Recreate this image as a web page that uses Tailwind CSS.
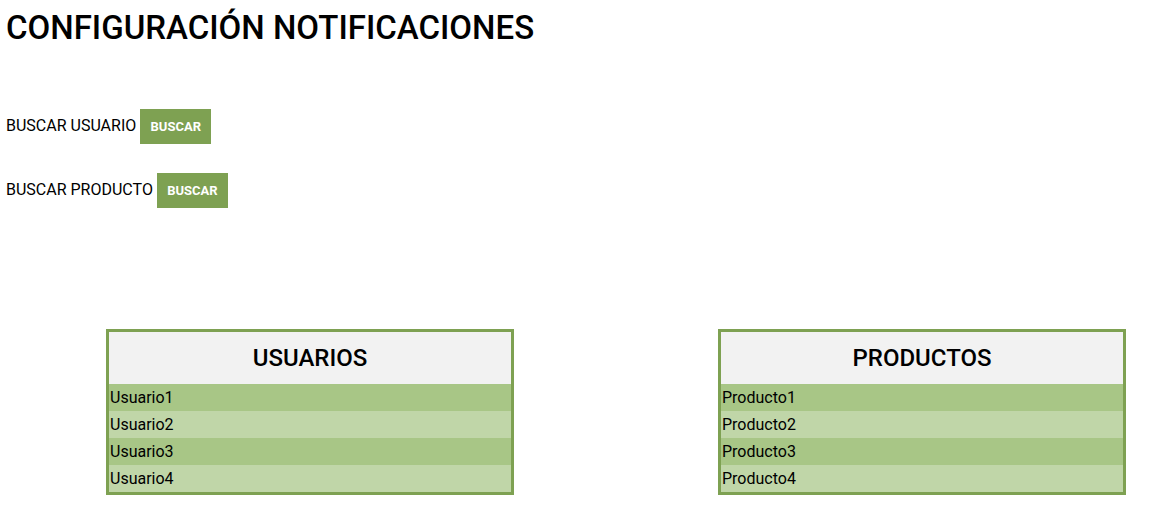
<!DOCTYPE html>
<html lang="es">
<head>
<meta charset="utf-8">
<title>Configuración notificaciones</title>
<script src="https://cdn.jsdelivr.net/npm/@tailwindcss/browser@4"></script>
</head>
<body class="bg-white font-['Roboto',sans-serif] text-base text-black">
<main class="flex flex-col px-1.5 pt-2">
  <h1 class="text-[33px] leading-[40px] font-medium">CONFIGURACIÓN NOTIFICACIONES</h1>
  <form class="mt-[61px] flex flex-col gap-[29px]">
    <div class="flex items-center gap-1">
      <span id="user-label" class="pb-0.5">BUSCAR USUARIO</span>
      <button type="button" aria-describedby="user-label" class="h-[35px] min-w-[71px] bg-[#7ea152] px-2.5 text-[13px] font-bold text-white">BUSCAR</button>
    </div>
    <div class="flex items-center gap-1">
      <span id="product-label" class="pb-0.5">BUSCAR PRODUCTO</span>
      <button type="button" aria-describedby="product-label" class="h-[35px] min-w-[71px] bg-[#7ea152] px-2.5 text-[13px] font-bold text-white">BUSCAR</button>
    </div>
  </form>
  <div class="mt-[121px] mr-[21px] ml-[100px] grid grid-cols-[2fr_1fr_2fr]">
    <table class="border-separate border-spacing-0 border-[3px] border-[#7ea152]">
      <thead><tr><th class="h-[52px] bg-[#f2f2f2] p-0 text-2xl font-medium">USUARIOS</th></tr></thead>
      <tbody>
        <tr class="h-[27px] odd:bg-[#a8c686] even:bg-[#c0d6a8]"><td class="px-px py-0">Usuario1</td></tr>
        <tr class="h-[27px] odd:bg-[#a8c686] even:bg-[#c0d6a8]"><td class="px-px py-0">Usuario2</td></tr>
        <tr class="h-[27px] odd:bg-[#a8c686] even:bg-[#c0d6a8]"><td class="px-px py-0">Usuario3</td></tr>
        <tr class="h-[27px] odd:bg-[#a8c686] even:bg-[#c0d6a8]"><td class="px-px py-0">Usuario4</td></tr>
      </tbody>
    </table>
    <table class="col-start-3 border-separate border-spacing-0 border-[3px] border-[#7ea152]">
      <thead><tr><th class="h-[52px] bg-[#f2f2f2] p-0 text-2xl font-medium">PRODUCTOS</th></tr></thead>
      <tbody>
        <tr class="h-[27px] odd:bg-[#a8c686] even:bg-[#c0d6a8]"><td class="px-px py-0">Producto1</td></tr>
        <tr class="h-[27px] odd:bg-[#a8c686] even:bg-[#c0d6a8]"><td class="px-px py-0">Producto2</td></tr>
        <tr class="h-[27px] odd:bg-[#a8c686] even:bg-[#c0d6a8]"><td class="px-px py-0">Producto3</td></tr>
        <tr class="h-[27px] odd:bg-[#a8c686] even:bg-[#c0d6a8]"><td class="px-px py-0">Producto4</td></tr>
      </tbody>
    </table>
  </div>
</main>
</body>
</html>
